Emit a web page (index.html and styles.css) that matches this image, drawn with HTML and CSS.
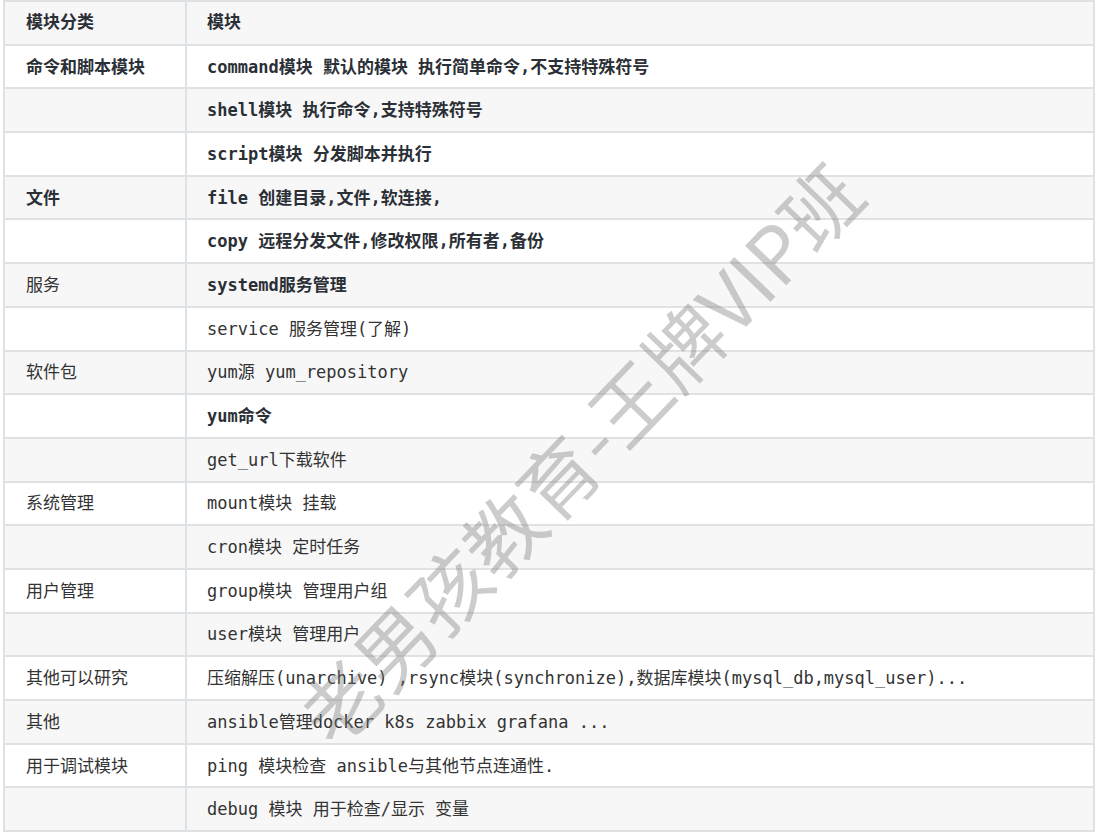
FILE: index.html
```html
<!DOCTYPE html>
<html lang="zh-CN">
<head>
<meta charset="utf-8">
<title>Ansible 模块</title>
<link rel="stylesheet" href="styles.css">
</head>
<body>
<div class="page">
<table class="mods">
  <thead>
    <tr><th class="cat">模块分类</th><th class="mod">模块</th></tr>
  </thead>
  <tbody>
    <tr><td class="cat b">命令和脚本模块</td><td class="mod b">command模块 默认的模块 执行简单命令,不支持特殊符号</td></tr>
    <tr><td class="cat"></td><td class="mod b">shell模块 执行命令,支持特殊符号</td></tr>
    <tr><td class="cat"></td><td class="mod b">script模块 分发脚本并执行</td></tr>
    <tr><td class="cat b">文件</td><td class="mod b">file 创建目录,文件,软连接,</td></tr>
    <tr><td class="cat"></td><td class="mod b">copy 远程分发文件,修改权限,所有者,备份</td></tr>
    <tr><td class="cat">服务</td><td class="mod b">systemd服务管理</td></tr>
    <tr><td class="cat"></td><td class="mod">service 服务管理(了解)</td></tr>
    <tr><td class="cat">软件包</td><td class="mod">yum源 yum_repository</td></tr>
    <tr><td class="cat"></td><td class="mod b">yum命令</td></tr>
    <tr><td class="cat"></td><td class="mod">get_url下载软件</td></tr>
    <tr><td class="cat">系统管理</td><td class="mod">mount模块 挂载</td></tr>
    <tr><td class="cat"></td><td class="mod">cron模块 定时任务</td></tr>
    <tr><td class="cat">用户管理</td><td class="mod">group模块 管理用户组</td></tr>
    <tr><td class="cat"></td><td class="mod">user模块 管理用户</td></tr>
    <tr><td class="cat">其他可以研究</td><td class="mod">压缩解压(unarchive) ,rsync模块(synchronize),数据库模块(mysql_db,mysql_user)...</td></tr>
    <tr><td class="cat">其他</td><td class="mod">ansible管理docker k8s zabbix grafana ...</td></tr>
    <tr><td class="cat">用于调试模块</td><td class="mod">ping 模块检查 ansible与其他节点连通性.</td></tr>
    <tr><td class="cat"></td><td class="mod">debug 模块 用于检查/显示 变量</td></tr>
  </tbody>
</table>
<div class="watermark">老男孩教育-王牌VIP班</div>
</div>
</body>
</html>
```

FILE: styles.css
```css
html, body {
  margin: 0;
  padding: 0;
  background: #ffffff;
}

.page {
  position: relative;
  width: 1097px;
  height: 835px;
  overflow: hidden;
}

.mods {
  margin-left: 3px;
  width: 1092px;
  border-collapse: separate;
  border-spacing: 0;
  border-top: 2px solid #dfe2e5;
  border-left: 2px solid #dfe2e5;
  font-family: "DejaVu Sans Mono", "Noto Sans CJK SC", monospace;
  font-size: 17px;
  color: #333333;
  table-layout: fixed;
}

.mods th,
.mods td {
  padding: 0 20px;
  border-right: 2px solid #dfe2e5;
  border-bottom: 2px solid #dfe2e5;
  text-align: left;
  vertical-align: middle;
  white-space: nowrap;
  box-sizing: border-box;
  height: 43.7px;
  line-height: 20px;
}

.mods thead th {
  padding-bottom: 2px;
}

.mods th {
  font-weight: 700;
  color: #2b2f36;
}

.mods .cat {
  width: 182px;
  padding-left: 21px;
}

.mods .b {
  font-weight: 700;
  color: #2b2f36;
}

.mods thead tr {
  background: #f7f7f7;
}

.mods tbody tr:nth-child(2n) {
  background: #f7f7f7;
}

.watermark {
  position: absolute;
  left: 578px;
  top: 452px;
  transform: translate(-50%, -50%) rotate(-46deg);
  font-family: "Noto Sans CJK SC", sans-serif;
  font-weight: 400;
  font-size: 78px;
  white-space: nowrap;
  color: rgba(120, 120, 120, 0.38);
  pointer-events: none;
}
```
